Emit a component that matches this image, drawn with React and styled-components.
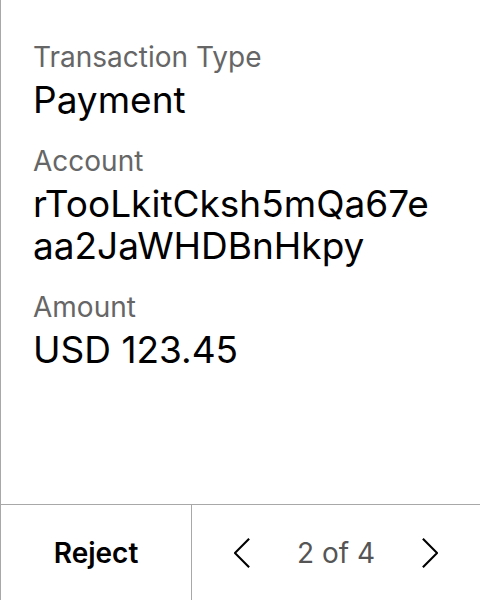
import React from 'react';
import styled, { createGlobalStyle } from 'styled-components';

const GlobalStyle = createGlobalStyle`
  html, body, #root {
    height: 100%;
    margin: 0;
  }
  body {
    font-family: Inter, "Noto Sans", sans-serif;
    background: #fff;
    color: #000;
  }
`;

const Panel = styled.div`
  display: flex;
  flex-direction: column;
  height: 100vh;
  box-sizing: border-box;
  border-left: 1px solid #a8a8a8;
`;

const Details = styled.div`
  flex: 1;
  padding: 41px 32px 0;
`;

const Field = styled.div`
  display: flex;
  flex-direction: column;
  gap: 6px;
  margin-bottom: 24px;
`;

const Label = styled.div`
  font-size: 28px;
  line-height: 32px;
  color: #666;
`;

const Value = styled.div`
  font-size: 37px;
  line-height: 42px;
  color: #000;
  word-break: break-all;
  max-width: 405px;
`;

const Footer = styled.div`
  display: grid;
  grid-template-columns: 191px 1fr;
  height: 96px;
  box-sizing: border-box;
  border-top: 1px solid #a8a8a8;
`;

const RejectButton = styled.button`
  display: flex;
  align-items: center;
  justify-content: center;
  border: none;
  border-right: 1px solid #a8a8a8;
  background: none;
  font-family: inherit;
  font-size: 28px;
  font-weight: 600;
  color: #000;
  padding: 0;
`;

const Pager = styled.div`
  display: flex;
  align-items: center;
  justify-content: center;
  gap: 47px;
`;

const Arrow = styled.button`
  display: flex;
  align-items: center;
  justify-content: center;
  width: 16px;
  height: 40px;
  border: none;
  background: none;
  padding: 0;
`;

const Counter = styled.span`
  font-size: 28px;
  color: #555;
`;

const Chevron = ({ dir }) => (
  <svg width="18" height="36" viewBox="0 0 18 36" fill="none">
    <polyline
      points={dir === 'left' ? '17,2 1,18 17,34' : '1,2 17,18 1,34'}
      stroke="#000"
      strokeWidth="2.4"
    />
  </svg>
);

const fields = [
  { label: 'Transaction Type', value: 'Payment' },
  { label: 'Account', value: 'rTooLkitCksh5mQa67eaa2JaWHDBnHkpy' },
  { label: 'Amount', value: 'USD 123.45' },
];

const App = () => (
  <>
    <GlobalStyle />
    <Panel>
      <Details>
        {fields.map((f) => (
          <Field key={f.label}>
            <Label>{f.label}</Label>
            <Value>{f.value}</Value>
          </Field>
        ))}
      </Details>
      <Footer>
        <RejectButton>Reject</RejectButton>
        <Pager>
          <Arrow>
            <Chevron dir="left" />
          </Arrow>
          <Counter>2 of 4</Counter>
          <Arrow>
            <Chevron dir="right" />
          </Arrow>
        </Pager>
      </Footer>
    </Panel>
  </>
);

export default App;
